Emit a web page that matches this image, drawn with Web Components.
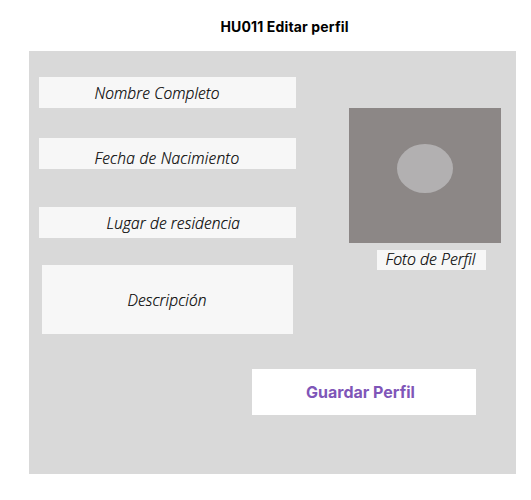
<!DOCTYPE html>
<html lang="es">
<head>
<meta charset="utf-8">
<title>HU011 Editar perfil</title>
<style>
body{margin:0;background:#fff;width:531px;height:500px;overflow:hidden}
</style>
</head>
<body>
<profile-page></profile-page>
<script>
class FieldBox extends HTMLElement{
  constructor(){
    super();
    this.attachShadow({mode:'open'}).innerHTML=`<style>
    :host{display:block;box-sizing:border-box;background:#f7f7f7;color:#000;white-space:nowrap;
      font:italic 300 15.5px/18px "Open Sans","Noto Sans",sans-serif;-webkit-text-stroke:.2px #000}
    span{display:block}
    </style><span><slot></slot></span>`;
  }
}
class PhotoBox extends HTMLElement{
  constructor(){
    super();
    this.attachShadow({mode:'open'}).innerHTML=`<style>
    :host{display:block;box-sizing:border-box;width:152px;height:135px;padding:36px 0 0 48px;background:#8c8786}
    div{width:56px;height:49px;border-radius:50%;background:#b2b0b1}
    </style><div></div>`;
  }
}
class SaveButton extends HTMLElement{
  constructor(){
    super();
    this.attachShadow({mode:'open'}).innerHTML=`<style>
    :host{display:block}
    button{display:block;box-sizing:border-box;width:224px;height:46px;border:0;margin:0;padding:0 0 0 54px;
      text-align:left;background:#fff;color:#7f56b8;font:700 16px/46px Inter,sans-serif;white-space:nowrap}
    </style><button><slot></slot></button>`;
  }
}
class ProfilePage extends HTMLElement{
  constructor(){
    super();
    this.attachShadow({mode:'open'}).innerHTML=`<style>
    :host{display:block}
    h1{margin:0;height:51px;box-sizing:border-box;padding:17px 0 0 220.5px;font:700 14px/20px Inter,sans-serif;letter-spacing:.14px;color:#000;white-space:nowrap}
    main{box-sizing:border-box;width:487px;height:423px;margin-left:29px;background:#d9d9d9;padding:26px 15px 0 10px}
    .cols{display:flex;justify-content:space-between;height:292px}
    .fields{width:257px}
    .fields field-box{height:31px}
    .n{padding:7px 0 0 55.5px;letter-spacing:.08px}
    .f{margin-top:30px;padding:11px 0 0 55.5px;letter-spacing:.23px}
    .l{margin-top:38px;padding:7px 0 0 67.5px;letter-spacing:.12px}
    .fields .d{margin:27px 3px 0;height:69px;padding:26px 0 0 85.5px;letter-spacing:.1px}
    .photo{width:152px;padding-top:31px}
    .p{width:109px;height:20px;margin:7px 0 0 28px;padding-left:8.5px;font-size:15.8px}
    save-button{margin-left:213px}
    </style>
    <h1>HU011 Editar perfil</h1>
    <main>
      <div class="cols">
        <div class="fields">
          <field-box class="n">Nombre Completo</field-box>
          <field-box class="f">Fecha de Nacimiento</field-box>
          <field-box class="l">Lugar de residencia</field-box>
          <field-box class="d">Descripción</field-box>
        </div>
        <div class="photo">
          <photo-box></photo-box>
          <field-box class="p">Foto de Perfil</field-box>
        </div>
      </div>
      <save-button>Guardar Perfil</save-button>
    </main>`;
  }
}
customElements.define('field-box',FieldBox);
customElements.define('photo-box',PhotoBox);
customElements.define('save-button',SaveButton);
customElements.define('profile-page',ProfilePage);
</script>
</body>
</html>
